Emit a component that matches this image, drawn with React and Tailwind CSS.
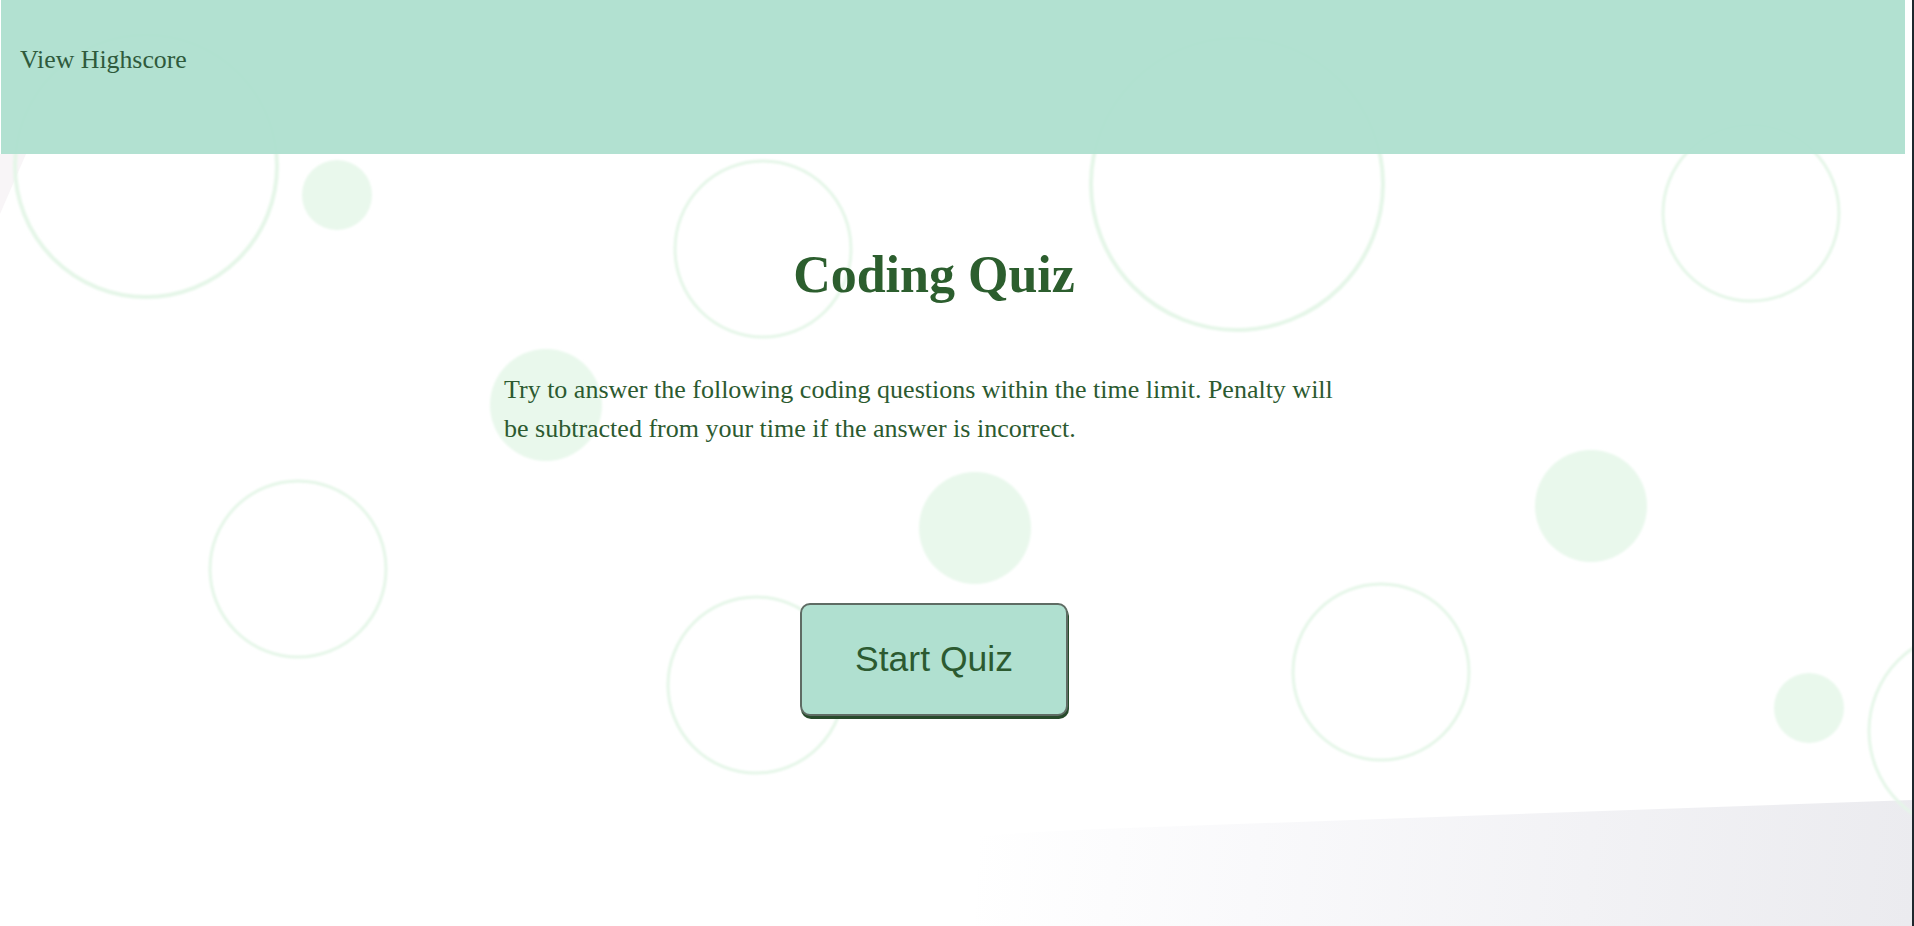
import React from 'react';

const rings = [
  { cx: 146, cy: 166, r: 131, w: 4 },
  { cx: 763, cy: 249, r: 88, w: 3 },
  { cx: 1237, cy: 184, r: 146, w: 4 },
  { cx: 1751, cy: 213, r: 88, w: 3 },
  { cx: 298, cy: 569, r: 88, w: 3 },
  { cx: 756, cy: 685, r: 88, w: 3 },
  { cx: 1381, cy: 672, r: 88, w: 3 },
  { cx: 1969, cy: 731, r: 100, w: 3 }
];

const dots = [
  { cx: 337, cy: 195, r: 35 },
  { cx: 546, cy: 405, r: 56 },
  { cx: 975, cy: 528, r: 56 },
  { cx: 1591, cy: 506, r: 56 },
  { cx: 1809, cy: 708, r: 35 }
];

function Bubbles() {
  return (
    <svg className="absolute inset-0 h-full w-full" viewBox="0 0 1912 926" preserveAspectRatio="none">
      <defs>
        <linearGradient id="wave" gradientUnits="userSpaceOnUse" x1="975" y1="830" x2="1912" y2="926">
          <stop offset="0" stopColor="#ffffff" />
          <stop offset="0.3" stopColor="#f9f9fb" />
          <stop offset="1" stopColor="#ebebef" />
        </linearGradient>
        <filter id="soft">
          <feGaussianBlur stdDeviation="0.8" />
        </filter>
      </defs>
      <polygon points="0,154 26,154 0,214" fill="#f8f5f7" />
      <path d="M975 926 L980 836 C1030 832 1060 831 1100 829 L1912 800 L1912 926 Z" fill="url(#wave)" />
      <g filter="url(#soft)">
        {rings.map((c, i) => (
          <circle key={i} cx={c.cx} cy={c.cy} r={c.r} fill="none" stroke="#e5f6e8" strokeWidth={c.w} />
        ))}
        {dots.map((c, i) => (
          <circle key={i} cx={c.cx} cy={c.cy} r={c.r} fill="#e9f8ec" />
        ))}
      </g>
    </svg>
  );
}

export default function App() {
  return (
    <div className="flex min-h-[926px] w-full bg-white" style={{ fontFamily: '"Liberation Serif", "Times New Roman", serif' }}>
      <div className="relative flex-1 overflow-hidden">
        <Bubbles />

        <header className="relative ml-px mr-[7px] h-[154px] bg-[#aedfcf]/95 pl-[19px] pt-[45px]">
          <a href="#" className="text-[25.8px] leading-[1.15] text-[#2f5a3c]">View Highscore</a>
        </header>

        <main className="relative ml-[504px] w-[860px] pt-[91px]">
          <h1 className="text-center text-[52px] font-bold leading-[1.15] text-[#2c5e2e]">Coding Quiz</h1>
          <p className="mt-[65px] w-[840px] text-[26px] leading-[39px] text-[#2c5a30]">
            Try to answer the following coding questions within the time limit. Penalty will be subtracted from your time if the answer is incorrect.
          </p>
          <div className="mt-[155px] flex justify-center">
            <button
              type="button"
              className="h-[113px] w-[268px] rounded-[10px] border-2 border-[#5f6c64] bg-[#b0e0d0] text-[35.5px] text-[#2c5a30] shadow-[1px_3px_0_#274a2b]"
              style={{ fontFamily: '"Liberation Sans", Arial, sans-serif' }}
            >
              Start Quiz
            </button>
          </div>
        </main>
      </div>
      <div className="w-[2px] bg-[#1f272d]" />
    </div>
  );
}
